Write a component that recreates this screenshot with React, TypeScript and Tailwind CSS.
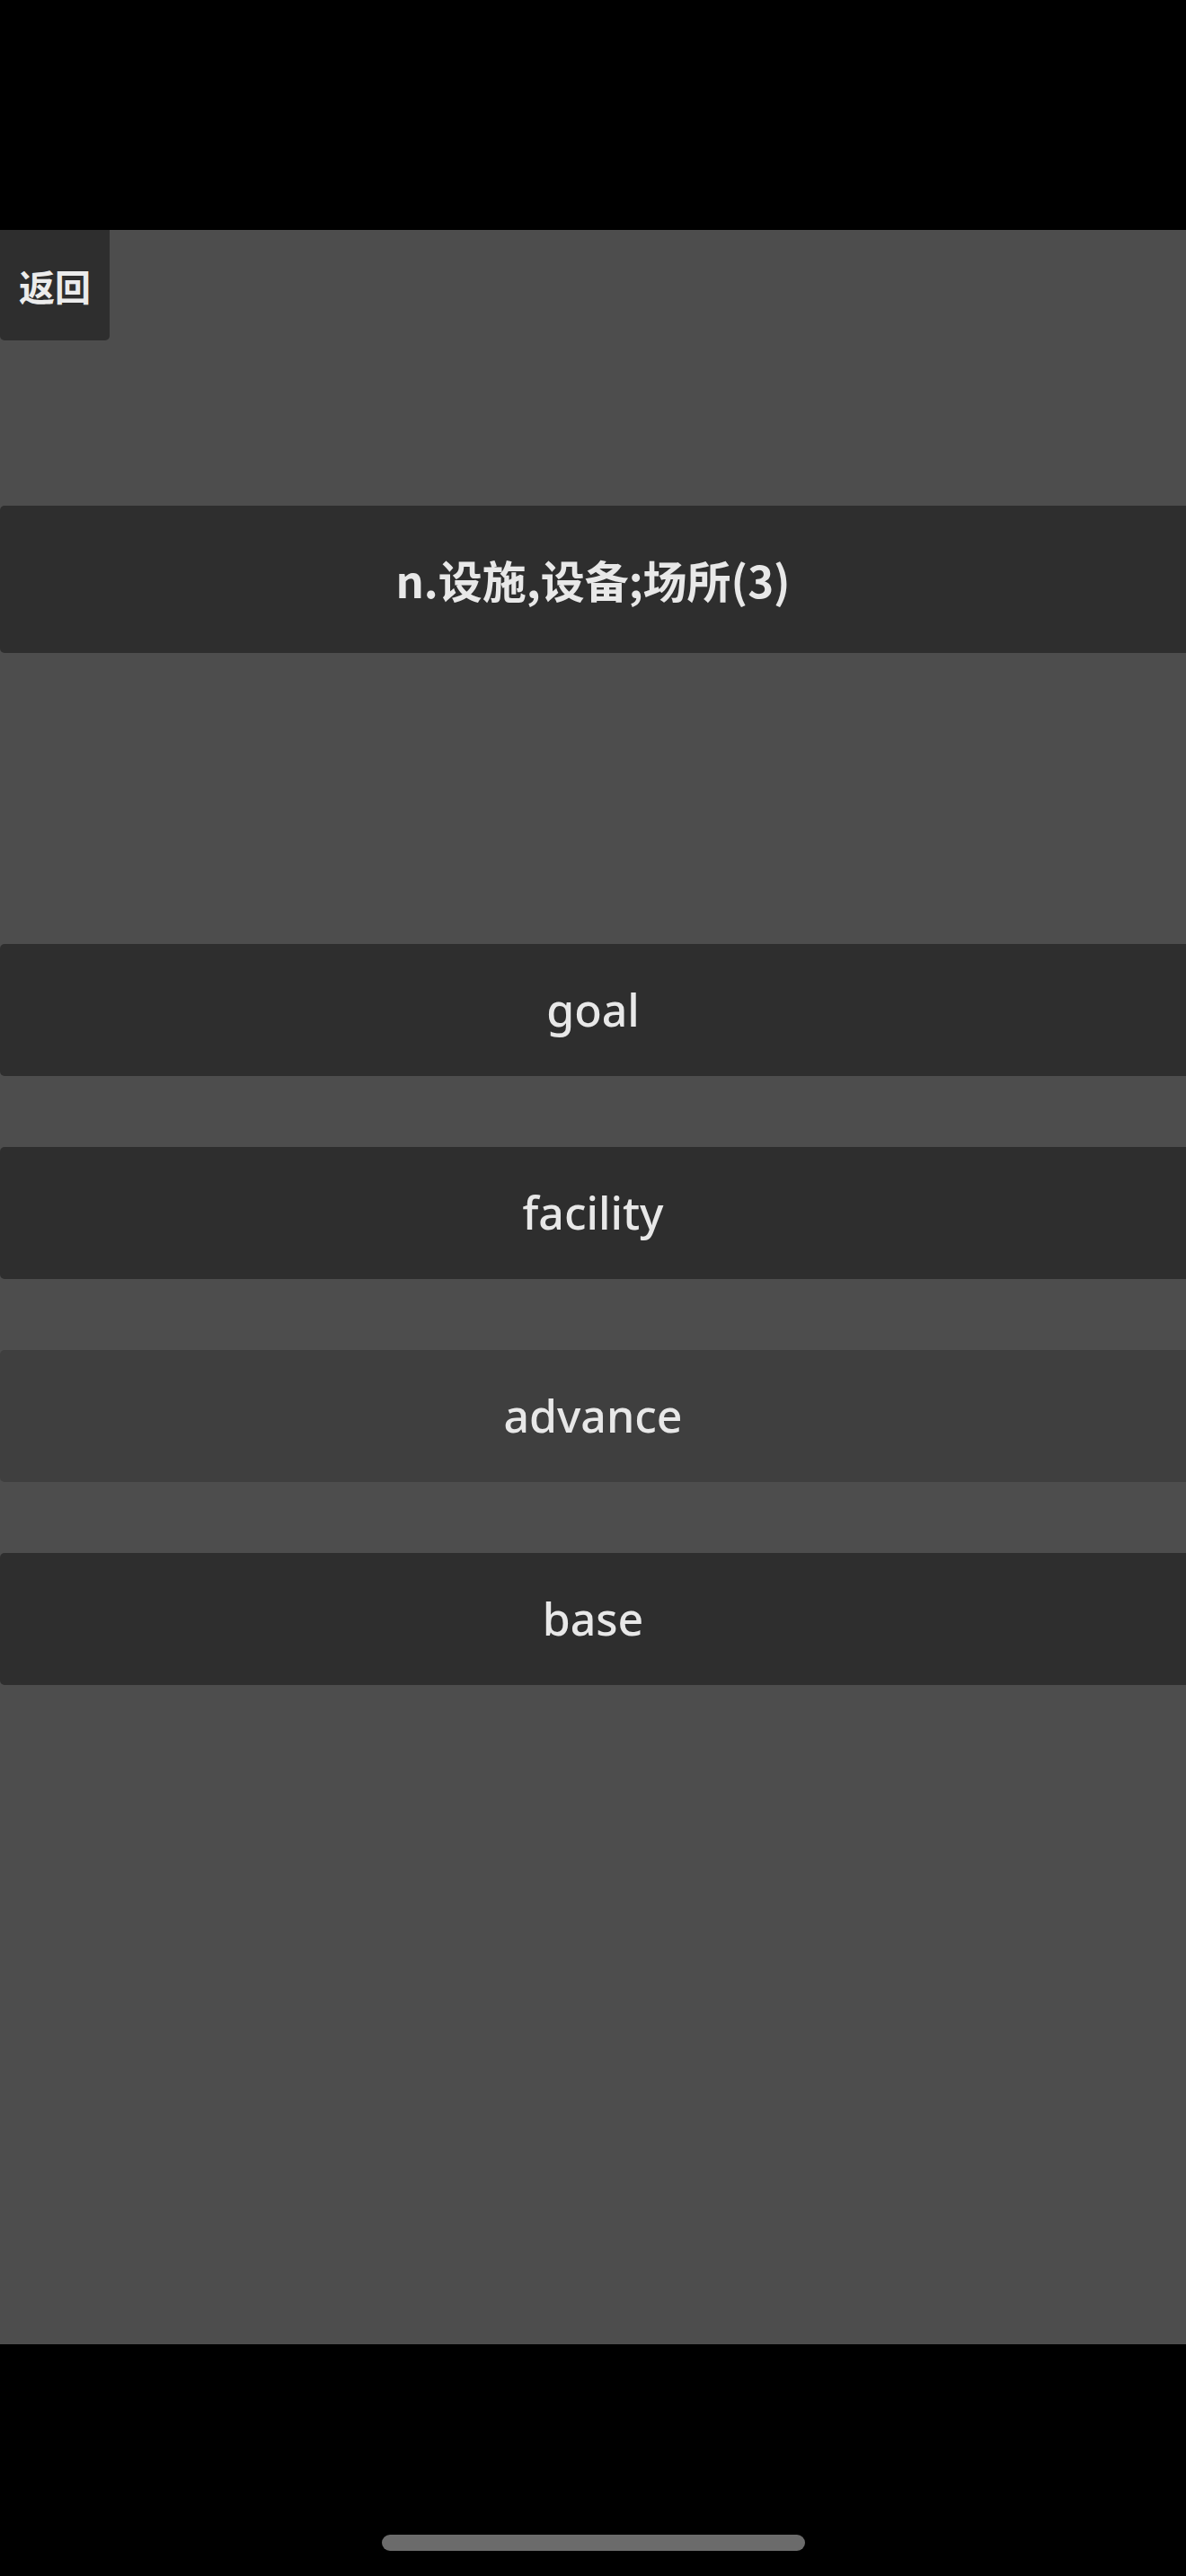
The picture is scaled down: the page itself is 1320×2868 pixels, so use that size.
import React from "react";

const words = [
  { t: "goal", bg: "bg-[#2e2e2e]" },
  { t: "facility", bg: "bg-[#2e2e2e]" },
  { t: "advance", bg: "bg-[#3f3f3f]" },
  { t: "base", bg: "bg-[#2e2e2e]" },
];

export default function App() {
  return (
    <div className="w-[1320px] h-[2868px] bg-black flex flex-col" style={{ fontFamily: '"Noto Sans", "Noto Sans CJK SC", sans-serif' }}>
      <div className="h-[256px] shrink-0" />
      <div className="h-[2354px] shrink-0 bg-[#4d4d4d] flex flex-col">
        <div className="w-[122px] h-[123px] bg-[#2e2e2e] rounded-br-[5px] rounded-bl-[5px] flex items-center justify-center text-[40px] font-bold text-[#ececec]" style={{ fontFamily: '"Noto Sans CJK SC", sans-serif' }}>
          返回
        </div>
        <div className="mt-[184px] h-[164px] bg-[#2e2e2e] rounded-l-[5px] flex items-center justify-center text-[49px] font-bold text-[#e8e8e8]" style={{ fontFamily: '"Noto Sans CJK SC", sans-serif' }}>
          n.设施,设备;场所(3)
        </div>
        <div className="mt-[324px] flex flex-col gap-[79px]">
          {words.map((w) => (
            <div key={w.t} className={`h-[147px] ${w.bg} rounded-l-[5px] flex items-center justify-center text-[50px] font-medium text-[#e8e8e8]`}>
              {w.t}
            </div>
          ))}
        </div>
      </div>
      <div className="flex-1 flex flex-col items-center">
        <div className="mt-[212px] w-[471px] h-[18px] rounded-full bg-[#6b6b6b]" />
      </div>
    </div>
  );
}
